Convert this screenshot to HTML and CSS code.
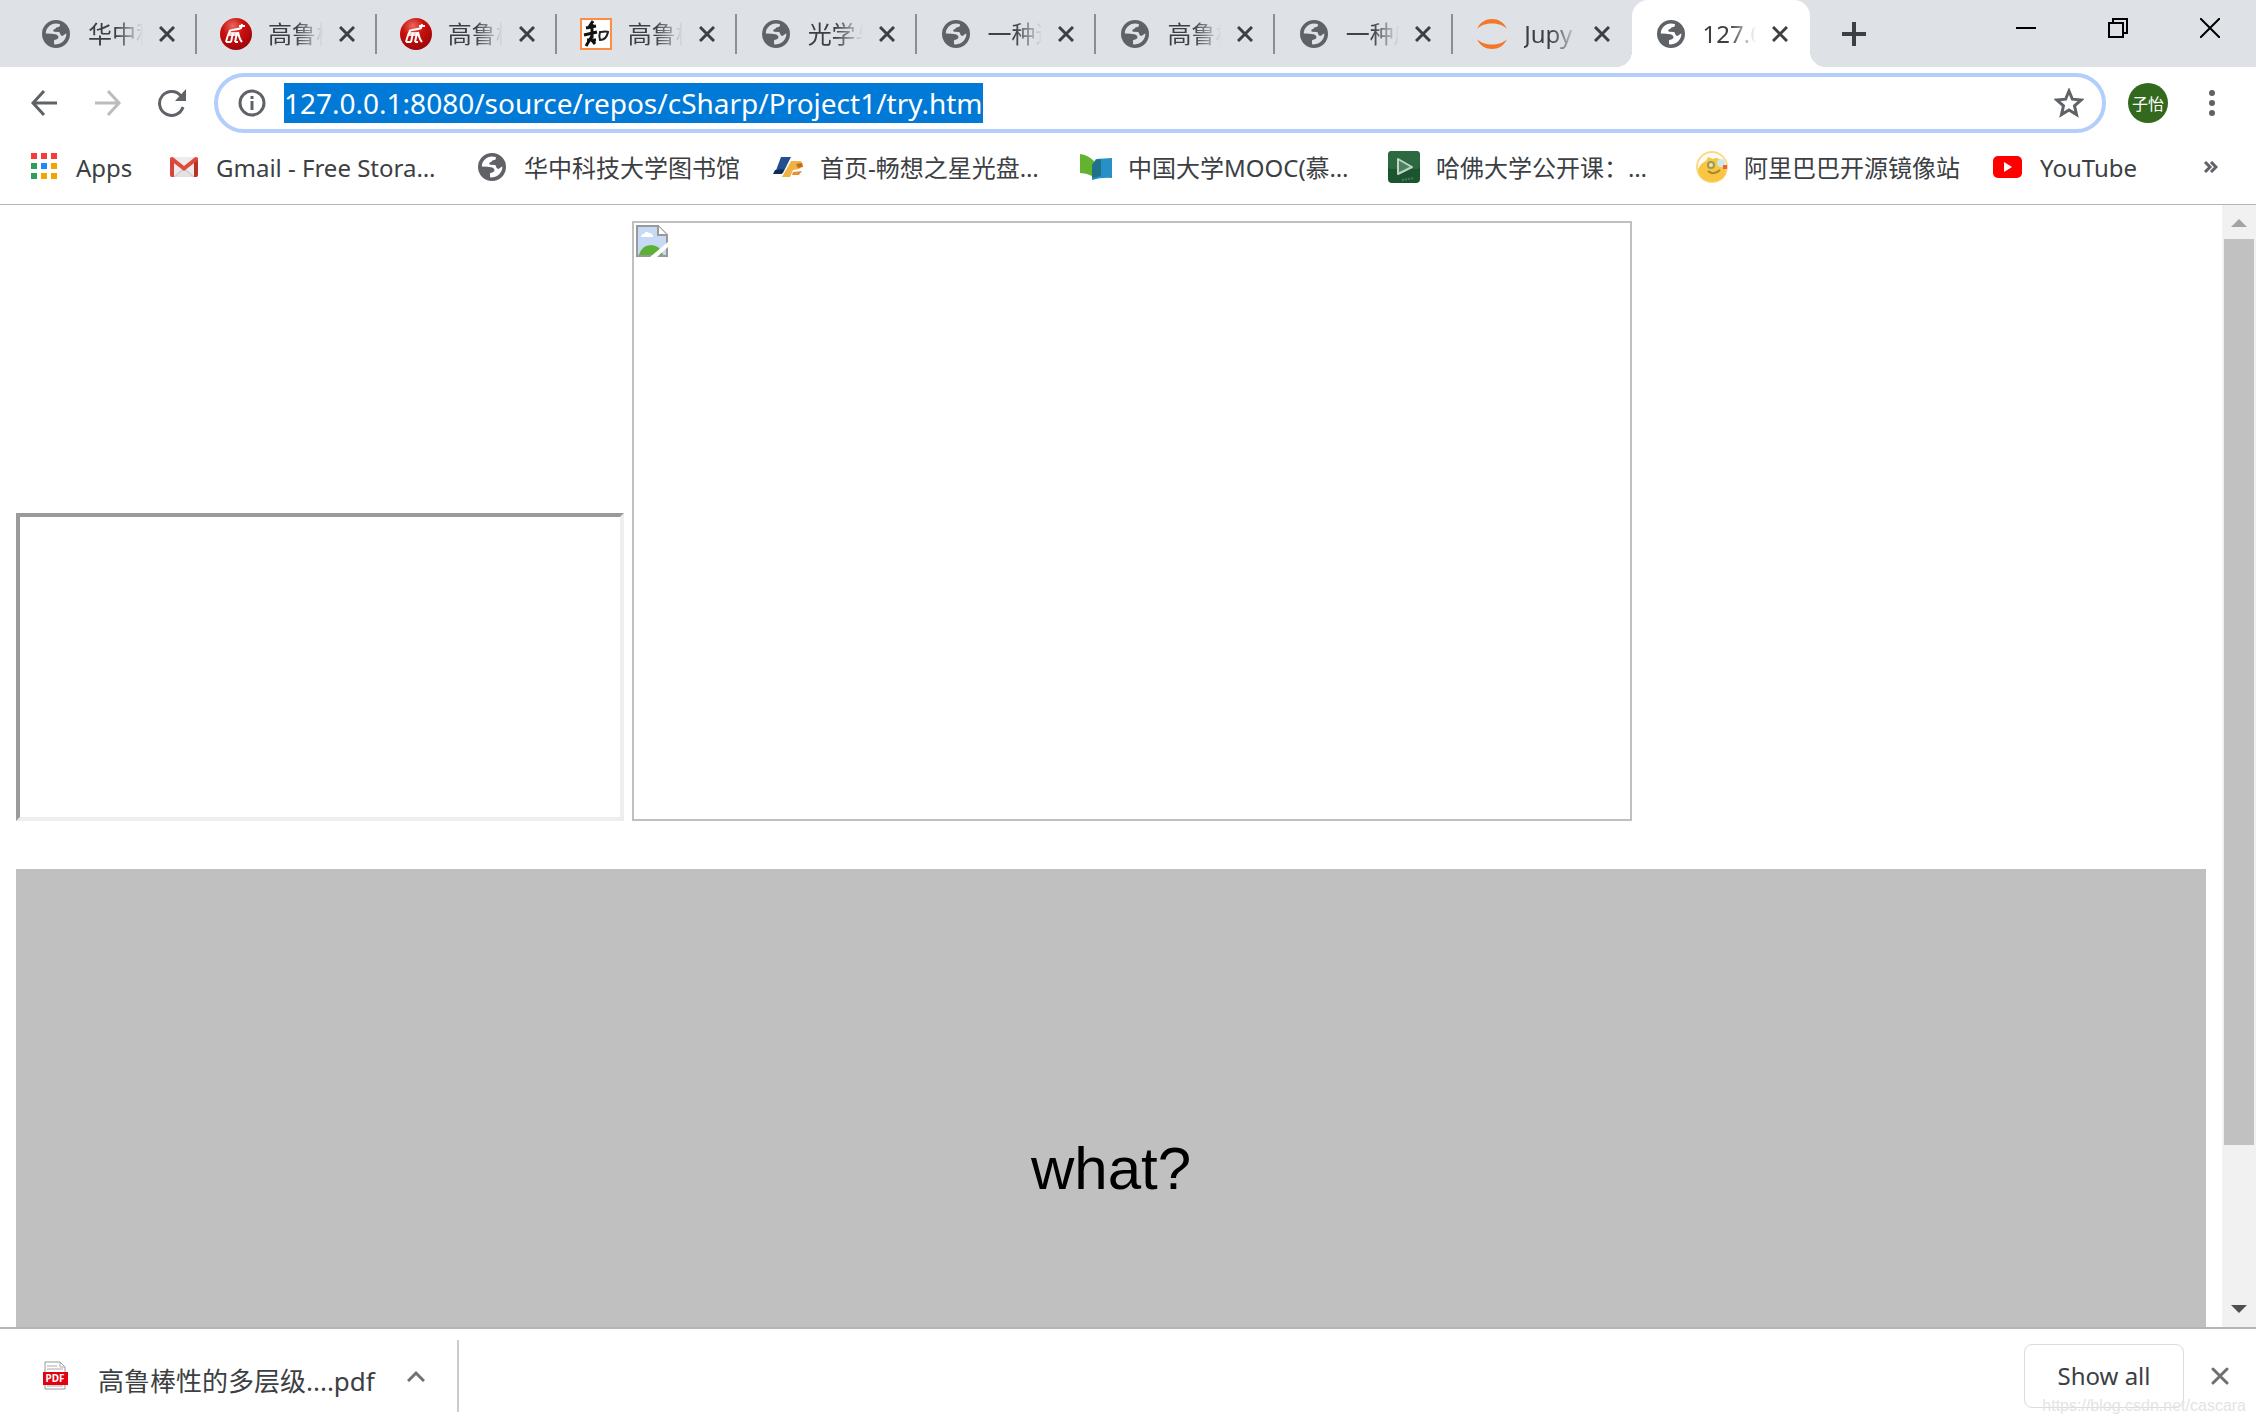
FILE: index.html
```html
<!DOCTYPE html>
<html lang="en">
<head>
<meta charset="utf-8">
<title>127.0.0.1:8080/source/repos/cSharp/Project1/try.htm</title>
<link rel="stylesheet" href="styles.css">
</head>
<body>
<svg class="defs" aria-hidden="true">
  <symbol id="globe" viewBox="0 0 28 28">
    <path fill="#5f6368" fill-rule="evenodd" d="M14 0a14 14 0 1 0 0 28a14 14 0 0 0 0-28ZM3.8 13.6C3.8 8 8.400 3.800 14 3.600L17.800 4C18.400 6.200 17.200 7.200 15.200 7.200C14 7.200 14.200 8.800 12.400 9.200C10.800 9.600 10.800 11.600 12.600 11.800L17 12C18.600 12.800 17.800 15.200 19.600 15.800C21.600 16.400 22.400 14 24.400 13.600C24.400 19.600 19.600 24.400 14 24.400L12 24.200V20.400C13.200 19.400 17 19.400 16.400 16.800C15.800 14 12 14.200 9.600 13.800Z"/>
  </symbol>
  <symbol id="school" viewBox="0 0 32 32">
    <radialGradient id="ball" cx=".4" cy=".25" r=".75"><stop offset="0" stop-color="#e9695f"/><stop offset=".45" stop-color="#c9110f"/><stop offset="1" stop-color="#a00508"/></radialGradient>
    <circle cx="16" cy="16" r="16" fill="url(#ball)"/>
    <path d="M6 24c1-4 2-8 4-11M11 24l2-9M15 24l2-9M18 14c1 5 2 8 4 10M9 13c4-2 8-1 12-3l1-4M19 8h6M6 24h5M15 24h3" fill="none" stroke="#fff" stroke-width="2"/>
    <path d="M9 14h10l-1 4H8Z" fill="#fff" opacity=".8"/>
  </symbol>
  <symbol id="cross" viewBox="0 0 16 16">
    <path d="M1 1 15 15M15 1 1 15" fill="none" stroke="currentColor" stroke-width="3"/>
  </symbol>
</svg>

<div class="window">
  <header class="strip">
    <nav class="tabs" aria-label="Tabs">
      <div class="tab"><svg class="fav"><use href="#globe" x="2" y="2" width="28" height="28"/></svg><span class="title">华中科</span><button class="close" aria-label="Close tab"><svg><use href="#cross"/></svg></button></div>
      <div class="tab"><svg class="fav"><use href="#school"/></svg><span class="title">高鲁棒</span><button class="close" aria-label="Close tab"><svg><use href="#cross"/></svg></button></div>
      <div class="tab"><svg class="fav"><use href="#school"/></svg><span class="title">高鲁棒</span><button class="close" aria-label="Close tab"><svg><use href="#cross"/></svg></button></div>
      <div class="tab"><svg class="fav" viewBox="0 0 32 32"><path fill="#fff" stroke="#ff8c42" stroke-width="2" d="M1 1h30v30H1z"/><path d="M13 3 9 9M6 10l10-2M4 17l13-3M12 6v14M12 18 6 28M11 21l4 5M7 22h9" fill="none" stroke="#111" stroke-width="3"/><path d="M20 14c-1 3-1 5 0 8 4 0 7-3 8-8-2-1-5 0-8 0Z" fill="none" stroke="#222" stroke-width="2"/></svg><span class="title">高鲁棒</span><button class="close" aria-label="Close tab"><svg><use href="#cross"/></svg></button></div>
      <div class="tab"><svg class="fav"><use href="#globe" x="2" y="2" width="28" height="28"/></svg><span class="title">光学与</span><button class="close" aria-label="Close tab"><svg><use href="#cross"/></svg></button></div>
      <div class="tab"><svg class="fav"><use href="#globe" x="2" y="2" width="28" height="28"/></svg><span class="title">一种适</span><button class="close" aria-label="Close tab"><svg><use href="#cross"/></svg></button></div>
      <div class="tab"><svg class="fav"><use href="#globe" x="2" y="2" width="28" height="28"/></svg><span class="title">高鲁棒</span><button class="close" aria-label="Close tab"><svg><use href="#cross"/></svg></button></div>
      <div class="tab"><svg class="fav"><use href="#globe" x="2" y="2" width="28" height="28"/></svg><span class="title">一种应</span><button class="close" aria-label="Close tab"><svg><use href="#cross"/></svg></button></div>
      <div class="tab last"><svg class="fav" viewBox="0 0 32 32"><path fill="#f37726" d="M1 11C4 4 10 1 16 1s12 3 15 10C27 7 22 5.500 16 5.500S5 7 1 11ZM1 21c3 7 9 10 15 10s12-3 15-10c-4 4-9 5.500-15 5.500S5 25 1 21Z"/></svg><span class="title">Jupy</span><button class="close" aria-label="Close tab"><svg><use href="#cross"/></svg></button></div>
      <div class="tab active"><svg class="fav"><use href="#globe" x="2" y="2" width="28" height="28"/></svg><span class="title">127.0</span><button class="close" aria-label="Close tab"><svg><use href="#cross"/></svg></button></div>
    </nav>
    <button class="newtab" aria-label="New tab"><svg width="24" height="24"><path d="M12 0v24M0 12h24" stroke="#3c4043" stroke-width="4"/></svg></button>
    <div class="controls">
      <button aria-label="Minimize"><svg width="20" height="20"><path d="M0 10h20" stroke="#000" stroke-width="2"/></svg></button>
      <button aria-label="Restore"><svg width="20" height="20"><path d="M1 5h14v14H1zM5 5V1h14v14h-4" fill="none" stroke="#000" stroke-width="2"/></svg></button>
      <button aria-label="Close"><svg width="20" height="20"><path d="M0 0 20 20M20 0 0 20" stroke="#000" stroke-width="2"/></svg></button>
    </div>
  </header>

  <div class="toolbar">
    <button class="tool" aria-label="Back"><svg width="28" height="28"><path d="M14 2 3 14l11 12M3 14h24" fill="none" stroke="#5f6368" stroke-width="3"/></svg></button>
    <button class="tool" aria-label="Forward"><svg width="28" height="28"><path d="M14 2 25 14 14 26M25 14H1" fill="none" stroke="#babcbe" stroke-width="3"/></svg></button>
    <button class="tool" aria-label="Reload"><svg width="28" height="28"><path d="M23 7A12 12 0 1 0 25 18" fill="none" stroke="#5f6368" stroke-width="3"/><path d="M28 0v12H17Z" fill="#5f6368"/></svg></button>
    <div class="omnibox">
      <button class="info" aria-label="Site information"><svg width="28" height="28"><circle cx="14" cy="14" r="12" fill="none" stroke="#5f6368" stroke-width="3"/><path d="M14 7v3M14 12v9" stroke="#5f6368" stroke-width="3"/></svg></button>
      <input class="url" type="text" aria-label="Address" value="127.0.0.1:8080/source/repos/cSharp/Project1/try.htm" spellcheck="false">
      <button class="star" aria-label="Bookmark"><svg width="30" height="30" viewBox="0 0 30 30"><path d="M15 3l3.400 8.200 8.800.8-6.700 5.800 2 8.700L15 21.900l-7.500 4.600 2-8.700L2.800 12l8.800-.8Z" fill="none" stroke="#5f6368" stroke-width="3"/></svg></button>
    </div>
    <button class="avatar">子怡</button>
    <button class="tool menu" aria-label="Menu"><svg width="6" height="28"><path fill="#5f6368" d="M3 1a3 3 0 1 1 0 6a3 3 0 0 1 0-6ZM3 11a3 3 0 1 1 0 6a3 3 0 0 1 0-6ZM3 21a3 3 0 1 1 0 6a3 3 0 0 1 0-6Z"/></svg></button>
  </div>

  <nav class="bookmarks" aria-label="Bookmarks">
    <a href="#"><svg class="fav" viewBox="0 0 32 32"><path fill="#f93a37" d="M3 2h6v6H3zM13 2h6v6h-6zM23 2h6v6h-6z"/><path fill="#2f9e5b" d="M3 12h6v6H3zM3 22h6v6H3z"/><path fill="#2089f8" d="M13 12h6v6h-6z"/><path fill="#f2a400" d="M23 12h6v6h-6zM13 22h6v6h-6zM23 22h6v6h-6z"/></svg><span>Apps</span></a>
    <a href="#"><svg class="fav" viewBox="0 0 32 32"><path fill="#ececec" d="M3 6h26v20H3z"/><path fill="#d2d2d2" d="M5 26 16 16l11 10Z"/><path fill="#e2e2e2" d="m8 26 8-8 8 8Z"/><path fill="#d5453a" d="M2 7h4v19H4q-2 0-2-2Z"/><path fill="#b93225" d="M26 9h4v15q0 2-2 2h-2Z"/><path fill="#de4b3e" d="M2 9V7q2-2 4 0l10 8 10-8q2-2 4 0v2L16 20Z"/></svg><span class="long">Gmail - Free Stora…</span></a>
    <a href="#"><svg class="fav"><use href="#globe" x="2" y="2" width="28" height="28"/></svg><span>华中科技大学图书馆</span></a>
    <a href="#"><svg class="fav" viewBox="0 0 32 32"><path fill="#214f8f" d="M9 6h10l-8 16H3Z"/><path fill="#122c59" d="m3 19 9-1-2 5H1Z"/><path fill="#efb243" d="M19 10h10l2 4-4 4-6 1-3 7h-8Z"/><path fill="#c46c1d" d="m24 13 6-1 1 4-5 1Z"/><path fill="#e58f37" d="m21 21 9-1-3 4h-7Z"/></svg><span class="long">首页-畅想之星光盘…</span></a>
    <a href="#"><svg class="fav" viewBox="0 0 32 32"><path fill="#63b32e" d="M0 3q8 1 14 7l-2 15Q6 22 0 22Z"/><path fill="#298fc7" d="M16 8 32 7v20q-10-1-20 2V14Z"/><path fill="#1f7288" d="M12 14q3-6 9-6v17l-9 2Z"/></svg><span class="long">中国大学MOOC(慕…</span></a>
    <a href="#"><svg class="fav" viewBox="0 0 32 32"><rect width="32" height="32" rx="4" fill="#1b552f"/><rect width="32" height="18" rx="4" fill="#2c6840"/><path d="M10 8v15l14-7Z" fill="#4c8260" stroke="#bfd4c5" stroke-width="2" stroke-linejoin="round"/><path d="M14 29l12-2" stroke="#487c58" stroke-width="2" stroke-dasharray="2 1"/></svg><span class="long">哈佛大学公开课：…</span></a>
    <a href="#"><svg class="fav" viewBox="0 0 32 32"><circle cx="16" cy="16" r="15" fill="#fffdf4" stroke="#fcd88c" stroke-width="2"/><path fill="#f8c640" d="M2 18q3-6 8-8l2-4 5 2q5-3 9 3l4 8q0 11-14 12Q3 30 2 18Z"/><circle cx="15" cy="14" r="3" fill="#f3e6b0" stroke="#9c9858" stroke-width="2"/><circle cx="25" cy="12" r="4" fill="#cce8e8"/><path d="M12 20q6 5 12-1" fill="none" stroke="#a88530" stroke-width="2"/><path fill="#ec6040" d="M27 14h4v4h-4z"/></svg><span>阿里巴巴开源镜像站</span></a>
    <a href="#"><svg class="fav" viewBox="0 0 32 32"><rect x="1" y="5" width="29" height="22" rx="5" fill="#f00"/><path fill="#fff" d="m12 11 8 5-8 5Z"/></svg><span>YouTube</span></a>
    <button class="more" aria-label="More bookmarks"><svg width="14" height="12"><path d="m1 1 5 5-5 5M7 1l5 5-5 5" fill="none" stroke="#5f6368" stroke-width="3"/></svg></button>
  </nav>

  <div class="viewport">
    <main class="page">
      <div class="media">
        <iframe class="frame" title="Embedded frame"></iframe>
        <div class="picture" role="img" aria-label="Missing image"><svg width="32" height="32"><path d="M1 1h21l9 9v21H1Z" fill="#c6d9f5" stroke="#999" stroke-width="2"/><path d="M5 12q0-3 3-3 2-4 5-1 4 0 4 4Z" fill="#fff"/><path d="M3 30q3-10 12-10 9 0 12 10Z" fill="#5cb034"/><path d="M22 1v9h9" fill="#fff" stroke="#999" stroke-width="2"/><path d="M14 32 32 17v5l-11 10Z" fill="#fff"/></svg></div>
      </div>
      <div class="banner">what?</div>
    </main>
    <div class="scrollbar" aria-hidden="true">
      <svg width="16" height="8"><path d="M0 8 8 0l8 8Z" fill="#a3a3a3"/></svg>
      <div class="track"><div class="thumb"></div></div>
      <svg width="16" height="8"><path d="m0 0 8 8 8-8Z" fill="#505050"/></svg>
    </div>
  </div>

  <footer class="shelf">
    <button class="download">
      <svg width="26" height="30"><path d="M3 1h15l5 5v22H3Z" fill="#fff" stroke="#999" stroke-width="1"/><path d="M18 1v5h5M5 5h10M5 8h16M5 25h16" fill="none" stroke="#aaa"/><path fill="#e3000f" d="M1 11h25v13H1z"/><text x="13" y="21" text-anchor="middle" class="pdf">PDF</text></svg>
      <span>高鲁棒性的多层级....pdf</span>
    </button>
    <button class="expand" aria-label="Download options"><svg width="18" height="12"><path d="m1 11 8-8 8 8" fill="none" stroke="#6e7174" stroke-width="3"/></svg></button>
    <button class="showall">Show all</button>
    <button class="dismiss" aria-label="Close downloads bar"><svg width="18" height="18"><path d="m2 2 14 14M16 2 2 16" stroke="#6e7174" stroke-width="3" stroke-linecap="round"/></svg></button>
    <span class="watermark">https://blog.csdn.net/cascara</span>
  </footer>
</div>
<script src="address.js"></script>
</body>
</html>
```
FILE: styles.css
```css
* { box-sizing: border-box; }
body {
  margin: 0;
  font-family: "Noto Sans", "Noto Sans CJK SC", sans-serif;
  font-size: 24px;
  color: #3c4043;
  background: #fff;
}
button {
  display: flex;
  align-items: center;
  justify-content: center;
  padding: 0;
  border: 0;
  background: none;
  font: inherit;
  color: inherit;
}
svg { display: block; flex: none; }
.defs { position: absolute; width: 0; height: 0; }
.window { display: flex; flex-direction: column; height: 100vh; overflow: hidden; }

/* tab strip */
.strip { display: flex; height: 67px; flex: none; padding-left: 17px; background: #dee1e6; }
.tabs { display: flex; flex: 1; min-width: 0; }
.tab {
  position: relative;
  display: flex;
  flex: 180 1 0;
  min-width: 0;
  align-items: center;
  padding: 0 20px 0 23px;
}
.tab:nth-child(n+7) { flex-grow: 178; }
.tab:not(.last):not(.active)::after {
  content: "";
  position: absolute;
  right: 0;
  top: 14px;
  width: 2px;
  height: 40px;
  background: #8b8e92;
}
.tab.active { background: #fff; border-radius: 16px 16px 0 0; }
.tab.active::before, .tab.active::after {
  content: "";
  position: absolute;
  bottom: 0;
  width: 16px;
  height: 16px;
}
.tab.active::before { right: 100%; background: radial-gradient(circle at 0 0, transparent 16px, #fff 16px); }
.tab.active::after { left: 100%; background: radial-gradient(circle at 100% 0, transparent 16px, #fff 16px); }
.fav { width: 32px; height: 32px; }
.title {
  flex: 1;
  min-width: 0;
  margin: 0 14px 0 16px;
  line-height: 36px;
  overflow: hidden;
  white-space: nowrap;
  -webkit-mask-image: linear-gradient(90deg, #000 50%, transparent);
  mask-image: linear-gradient(90deg, #000 50%, transparent);
}
.close { width: 20px; height: 32px; }
.close svg { width: 16px; height: 16px; }
.newtab { width: 88px; }
.controls { display: flex; margin-left: 82px; }
.controls button { width: 92px; height: 56px; }

/* toolbar */
.toolbar { display: flex; align-items: center; height: 71px; flex: none; padding: 0 12px; }
.tool { width: 64px; height: 60px; }
.omnibox {
  display: flex;
  flex: 1;
  align-items: center;
  height: 60px;
  margin: 0 22px 0 10px;
  border: 4px solid #b3cefb;
  border-radius: 30px;
}
.info { width: 66px; height: 52px; padding-left: 2px; }
.star { width: 66px; height: 52px; }
.url {
  flex: 1;
  min-width: 0;
  height: 40px;
  padding: 0;
  border: 0;
  outline: 0;
  background: none;
  font: inherit;
  font-size: 28px;
  line-height: 40px;
  color: #202124;
}
.url::selection { background: rgba(0, 120, 215, 0.996); color: #fff; }
.avatar { width: 40px; height: 40px; border-radius: 50%; background: #33691e; color: #fff; font-size: 16px; }
.menu { margin-left: 12px; }

/* bookmarks */
.bookmarks {
  display: flex;
  align-items: center;
  gap: 32px;
  height: 67px;
  flex: none;
  padding: 0 38px 8px 28px;
  border-bottom: 1px solid #b4b4b4;
}
.bookmarks a { display: flex; align-items: center; gap: 16px; color: inherit; text-decoration: none; white-space: nowrap; }
.bookmarks span { min-width: 60px; padding-top: 2px; line-height: 36px; }
.bookmarks .long { width: 228px; }
.more { margin-left: auto; }

/* page */
.viewport { display: flex; flex: 1; min-height: 0; overflow: hidden; }
.page { flex: 1; min-width: 0; padding: 16px; overflow: hidden; }
.media { display: flex; align-items: flex-end; gap: 8px; margin-bottom: 48px; }
.frame { width: 608px; height: 308px; border: 4px solid; border-color: #9a9a9a #eee #eee #9a9a9a; }
.picture { width: 1000px; height: 600px; padding: 2px; border: 2px solid #c0c0c0; }
.banner {
  display: flex;
  align-items: center;
  justify-content: center;
  height: 598px;
  background: #c0c0c0;
  color: #000;
  font-family: "Liberation Sans", Arial, sans-serif;
  font-size: 60px;
}
.scrollbar {
  display: flex;
  flex-direction: column;
  align-items: center;
  width: 34px;
  padding: 14px 2px;
  background: #f1f1f1;
}
.track { flex: 1; width: 100%; margin: 12px 0; }
.thumb { height: 86%; background: #c1c1c1; }

/* downloads */
.shelf {
  position: relative;
  display: flex;
  align-items: center;
  height: 97px;
  flex: none;
  padding: 0 18px 2px 42px;
  border-top: 2px solid #b5b5b5;
}
.download { gap: 30px; font-size: 26px; line-height: 40px; white-space: nowrap; }
.download span { padding-top: 10px; }
.pdf { font-size: 10px; font-weight: 700; fill: #fff; }
.expand { width: 84px; height: 72px; border-right: 2px solid #ccc; }
.showall {
  width: 160px;
  height: 64px;
  margin-left: auto;
  border: 1px solid #dadce0;
  border-radius: 8px;
}
.dismiss { width: 36px; height: 36px; margin-left: 18px; }
.watermark {
  position: absolute;
  right: 10px;
  bottom: 6px;
  font-family: "Liberation Sans", Arial, sans-serif;
  font-size: 16px;
  line-height: 24px;
  color: #e4e4e4;
}
```
FILE: address.js
```js
const address = document.querySelector('.url');
address.focus();
address.select();
```
